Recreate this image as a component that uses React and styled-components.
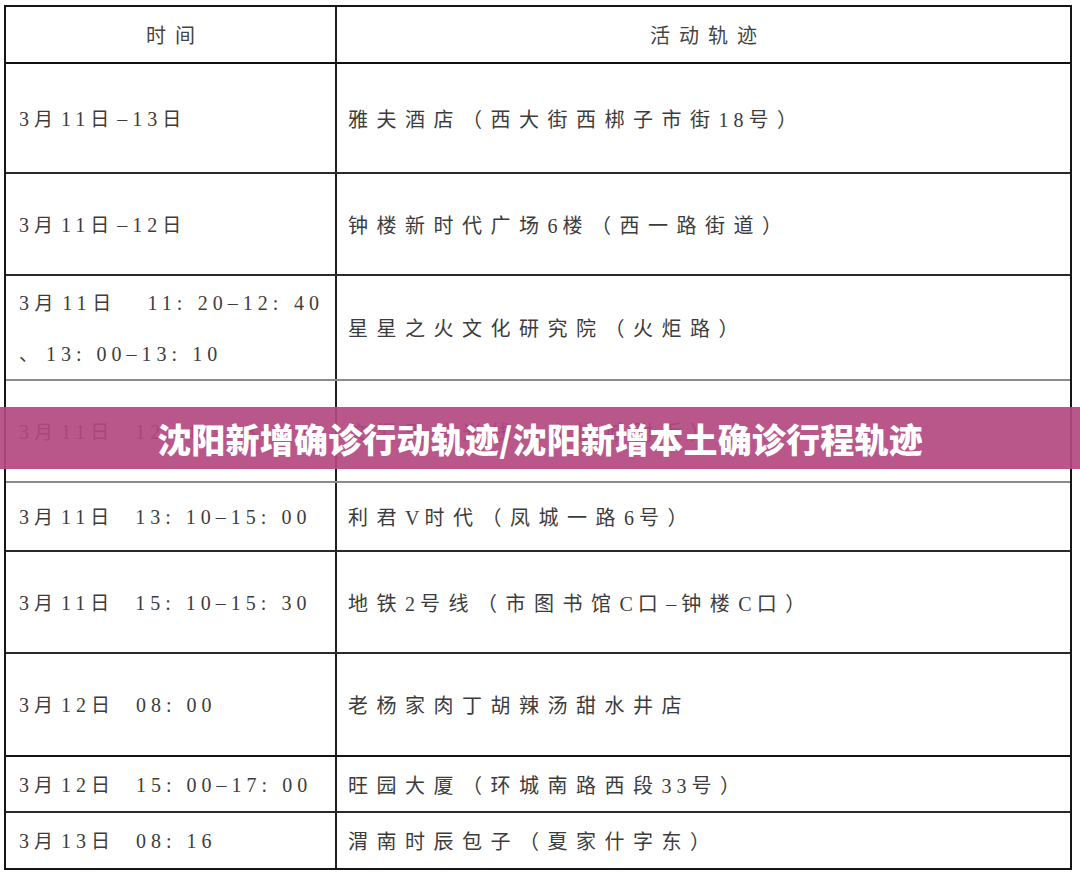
import React from "react";
import styled, { createGlobalStyle } from "styled-components";

const GlobalStyle = createGlobalStyle`
  html, body {
    margin: 0;
    padding: 0;
    background: #fff;
  }
  body {
    font-family: "Noto Sans CJK SC", sans-serif;
  }
`;

const rows = [
  { h: 110, date: "3月11日–13日", place: "雅夫酒店（西大街西梆子市街18号）" },
  { h: 102, date: "3月11日–12日", place: "钟楼新时代广场6楼（西一路街道）" },
  {
    h: 105,
    date: "3月11日　11: 20–12: 40",
    extra: "、13: 00–13: 10",
    place: "星星之火文化研究院（火炬路）",
    tone: "gray",
  },
  { h: 102, date: "3月11日", time: "12: 40–13: 00", place: "文汇天地光线（大悦城附近）", tone: "gray" },
  { h: 69, date: "3月11日", time: "13: 10–15: 00", place: "利君V时代（凤城一路6号）" },
  { h: 102, date: "3月11日", time: "15: 10–15: 30", place: "地铁2号线（市图书馆C口–钟楼C口）" },
  { h: 103, date: "3月12日", time: "08: 00", place: "老杨家肉丁胡辣汤甜水井店", thick: true },
  { h: 56, date: "3月12日", time: "15: 00–17: 00", place: "旺园大厦（环城南路西段33号）" },
  { h: 55, date: "3月13日", time: "08: 16", place: "渭南时辰包子（夏家什字东）", last: true },
];

// Latin runs (digits, colons, dashes) get their own face and spacing
const mixed = (text, ls) =>
  text
    .split(/([0-9A-Za-z:\-–][0-9A-Za-z: \-–]*)/)
    .map((part, i) =>
      i % 2 ? (
        <Latin key={i} $ls={ls}>
          {part}
        </Latin>
      ) : (
        part
      )
    );

export default function App() {
  return (
    <Page>
      <GlobalStyle />
      <Sheet>
        <Row $h={57} $line="#111">
          <HeadCell $divider>时间</HeadCell>
          <HeadCell>活动轨迹</HeadCell>
        </Row>
        {rows.map((r, i) => (
          <Row
            key={i}
            $h={r.h}
            $last={r.last}
            $line={r.tone === "gray" ? "#8c8c8c" : r.thick ? "#151515" : "#2a2a2a"}
          >
            <TimeCell $divider>
              {r.extra ? (
                <>
                  <Spread>{mixed(r.date, 5)}</Spread>
                  <Line>{mixed(r.extra, 5)}</Line>
                </>
              ) : (
                <Line>
                  {mixed(r.date, 5)}
                  {r.time && <Clock>{mixed(r.time, 5)}</Clock>}
                </Line>
              )}
            </TimeCell>
            <PlaceCell>
              <Line>{mixed(r.place, 5)}</Line>
            </PlaceCell>
          </Row>
        ))}
      </Sheet>
      <Banner>沈阳新增确诊行动轨迹/沈阳新增本土确诊行程轨迹</Banner>
    </Page>
  );
}

const Page = styled.div`
  position: relative;
  width: 1080px;
  height: 877px;
  padding: 5px 0 0 4px;
  box-sizing: border-box;
  overflow: hidden;
`;

const Sheet = styled.div`
  width: 1068px;
  border: 2px solid #161616;
  box-sizing: border-box;
  color: #3c3c3c;
  font-family: "Noto Sans CJK SC", sans-serif;
`;

const Row = styled.div`
  display: grid;
  grid-template-columns: 331px 1fr;
  height: ${(p) => p.$h}px;
  box-sizing: border-box;
  border-bottom: ${(p) => (p.$last ? "none" : `2px solid ${p.$line}`)};
`;

const Cell = styled.div`
  display: flex;
  flex-direction: column;
  justify-content: center;
  box-sizing: border-box;
  border-right: ${(p) => (p.$divider ? "2px solid #1f1f1f" : "none")};
  white-space: nowrap;
`;

const HeadCell = styled(Cell)`
  align-items: center;
  padding-left: 9px;
  font-size: 20px;
  letter-spacing: 9px;
  color: #444;
`;

const TimeCell = styled(Cell)`
  padding-left: 13px;
  font-size: 19px;
  letter-spacing: 8px;
  line-height: 49px;
`;

const PlaceCell = styled(Cell)`
  padding-left: 11px;
  font-size: 20px;
  letter-spacing: 8.5px;
`;

const Line = styled.div``;

const Spread = styled.div`
  width: 305px;
  text-align: justify;
  text-align-last: justify;
`;

const Clock = styled.span`
  margin-left: 18px;
`;

const Latin = styled.span`
  font-family: "Liberation Serif", "Times New Roman", serif;
  font-size: 20px;
  letter-spacing: ${(p) => p.$ls}px;
`;

const Banner = styled.div`
  position: absolute;
  left: 0;
  right: 0;
  top: 407px;
  height: 62px;
  display: flex;
  align-items: center;
  justify-content: center;
  background: rgba(179, 72, 128, 0.92);
  color: #fff;
  font-family: "Noto Sans CJK SC", sans-serif;
  font-size: 34px;
  font-weight: 900;
  letter-spacing: 0.2px;
`;
